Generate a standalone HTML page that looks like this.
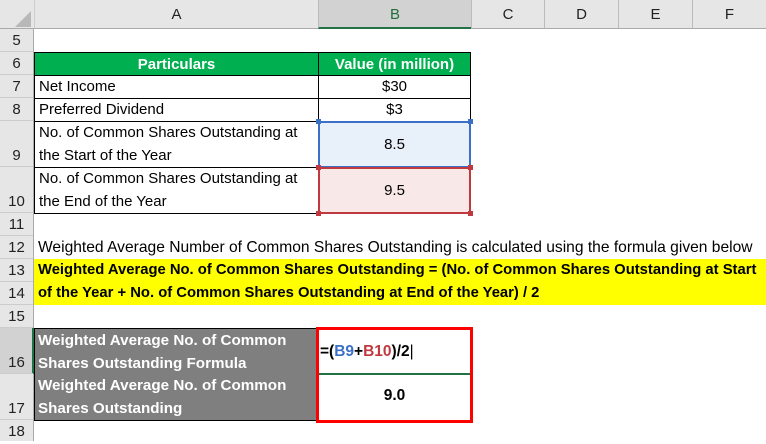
<!DOCTYPE html><html><head><style>
body{margin:0;width:766px;height:441px;overflow:hidden;background:#fff;font-family:"Liberation Sans",sans-serif;position:relative}
div{position:absolute;box-sizing:border-box;white-space:nowrap}
.h{background:#e6e6e6;color:#222;font-size:15px;text-align:center}
.t{font-size:15px;color:#000;line-height:23px}
.c{text-align:center}
.b{font-weight:bold}
</style></head><body>
<div class="h" style="left:0;top:0;width:766px;height:29px;border-bottom:1px solid #aaa"></div>
<div style="left:15px;top:11px;width:0;height:0;border-left:16px solid transparent;border-bottom:16px solid #b8b8b8"></div>
<div class="h" style="left:34px;top:0;width:284px;height:29px;line-height:29px;border-left:1px solid #ccc;border-bottom:1px solid #aaa">A</div>
<div class="h" style="left:318px;top:0;width:153px;height:29px;line-height:29px;background:#d2d2d2;color:#1f6e3a;border-bottom:2px solid #217346;border-left:1px solid #bbb">B</div>
<div class="h" style="left:471px;top:0;width:73px;height:29px;line-height:29px;border-left:1px solid #bbb;border-bottom:1px solid #aaa">C</div>
<div class="h" style="left:544px;top:0;width:74px;height:29px;line-height:29px;border-left:1px solid #bbb;border-bottom:1px solid #aaa">D</div>
<div class="h" style="left:618px;top:0;width:74px;height:29px;line-height:29px;border-left:1px solid #bbb;border-bottom:1px solid #aaa">E</div>
<div class="h" style="left:692px;top:0;width:74px;height:29px;line-height:29px;border-left:1px solid #bbb;border-bottom:1px solid #aaa">F</div>
<div class="h" style="left:0;top:29px;width:34px;height:412px;border-right:1px solid #aaa"></div>
<div class="h" style="left:0;top:328px;width:34px;height:46px;background:#d2d2d2;border-right:2px solid #217346"></div>
<div class="h" style="left:0;top:29px;width:33px;font-size:15px">
<div style="top:0;left:0;width:33px;height:23px;line-height:23px;border-bottom:1px solid #ccc">5</div>
<div style="top:23px;left:0;width:33px;height:23px;line-height:23px;border-bottom:1px solid #ccc">6</div>
<div style="top:46px;left:0;width:33px;height:23px;line-height:23px;border-bottom:1px solid #ccc">7</div>
<div style="top:69px;left:0;width:33px;height:23px;line-height:23px;border-bottom:1px solid #ccc">8</div>
<div style="top:92px;left:0;width:33px;height:46px;line-height:70px;border-bottom:1px solid #ccc">9</div>
<div style="top:138px;left:0;width:33px;height:46px;line-height:70px;border-bottom:1px solid #ccc">10</div>
<div style="top:184px;left:0;width:33px;height:23px;line-height:23px;border-bottom:1px solid #ccc">11</div>
<div style="top:207px;left:0;width:33px;height:23px;line-height:23px;border-bottom:1px solid #ccc">12</div>
<div style="top:230px;left:0;width:33px;height:23px;line-height:23px;border-bottom:1px solid #ccc">13</div>
<div style="top:253px;left:0;width:33px;height:23px;line-height:23px;border-bottom:1px solid #ccc">14</div>
<div style="top:276px;left:0;width:33px;height:23px;line-height:23px;border-bottom:1px solid #ccc">15</div>
<div style="top:299px;left:0;width:33px;height:46px;line-height:70px;border-bottom:1px solid #ccc">16</div>
<div style="top:345px;left:0;width:33px;height:46px;line-height:70px;border-bottom:1px solid #ccc">17</div>
<div style="top:391px;left:0;width:33px;height:23px;line-height:23px">18</div>
</div>
<div class="t b c" style="left:34px;top:52px;width:285px;height:24px;background:#00b050;color:#fff;border:1px solid #000">Particulars</div>
<div class="t b c" style="left:318px;top:52px;width:153px;height:24px;background:#00b050;color:#fff;border:1px solid #000">Value (in million)</div>
<div class="t" style="left:34px;top:75px;width:285px;height:24px;border:1px solid #000;border-top:0;padding-left:4px">Net Income</div>
<div class="t c" style="left:318px;top:75px;width:153px;height:24px;border:1px solid #000;border-top:0">$30</div>
<div class="t" style="left:34px;top:98px;width:285px;height:24px;border:1px solid #000;border-top:0;padding-left:4px">Preferred Dividend</div>
<div class="t c" style="left:318px;top:98px;width:153px;height:24px;border:1px solid #000;border-top:0">$3</div>
<div class="t" style="left:34px;top:121px;width:285px;height:47px;border:1px solid #000;border-top:0;padding-left:4px">No. of Common Shares Outstanding at<br>the Start of the Year</div>
<div class="t c" style="left:318px;top:121px;width:153px;height:47px;background:#e8f0fa;border:2px solid #3c6fc8;line-height:43px">8.5</div>
<div class="t" style="left:34px;top:167px;width:285px;height:47px;border:1px solid #000;border-top:0;padding-left:4px">No. of Common Shares Outstanding at<br>the End of the Year</div>
<div class="t c" style="left:318px;top:167px;width:153px;height:47px;background:#f9e8e8;border:2px solid #c0393f;line-height:43px">9.5</div>
<div style="left:316px;top:119px;width:5px;height:5px;background:#3c6fc8"></div>
<div style="left:468px;top:119px;width:5px;height:5px;background:#3c6fc8"></div>
<div style="left:316px;top:165px;width:5px;height:5px;background:#c0393f"></div>
<div style="left:468px;top:165px;width:5px;height:5px;background:#c0393f"></div>
<div style="left:316px;top:211px;width:5px;height:5px;background:#c0393f"></div>
<div style="left:468px;top:211px;width:5px;height:5px;background:#c0393f"></div>
<div class="t" style="left:38px;top:236px;font-size:15.6px">Weighted Average Number of Common Shares Outstanding is calculated using the formula given below</div>
<div class="t b" style="left:34px;top:259px;width:732px;height:46px;background:#ffff00;padding-left:4px;font-size:14.8px">Weighted Average No. of Common Shares Outstanding = (No. of Common Shares Outstanding at Start<br>of the Year + No. of Common Shares Outstanding at End of the Year) / 2</div>
<div class="t b" style="left:34px;top:328px;width:285px;height:47px;background:#7f7f7f;color:#fff;border:1px solid #000;padding-left:3px;font-size:15.2px">Weighted Average No. of Common<br>Shares Outstanding Formula</div>
<div class="t b" style="left:34px;top:374px;width:285px;height:47px;background:#7f7f7f;color:#fff;border:1px solid #000;border-top:0;padding-left:3px;font-size:15.2px">Weighted Average No. of Common<br>Shares Outstanding</div>
<div class="t b" style="left:320px;top:340px;font-size:15.5px">=(<span style="color:#3c6fc8">B9</span>+<span style="color:#c0393f">B10</span>)/2<span style="font-weight:normal">|</span></div>
<div style="left:319px;top:373px;width:151px;height:2px;background:#217346"></div>
<div class="t b c" style="left:318px;top:374px;width:153px;height:46px;line-height:44px;font-size:15.5px">9.0</div>
<div style="left:316px;top:327px;width:157px;height:96px;border:3px solid #ff0000"></div>
</body></html>
